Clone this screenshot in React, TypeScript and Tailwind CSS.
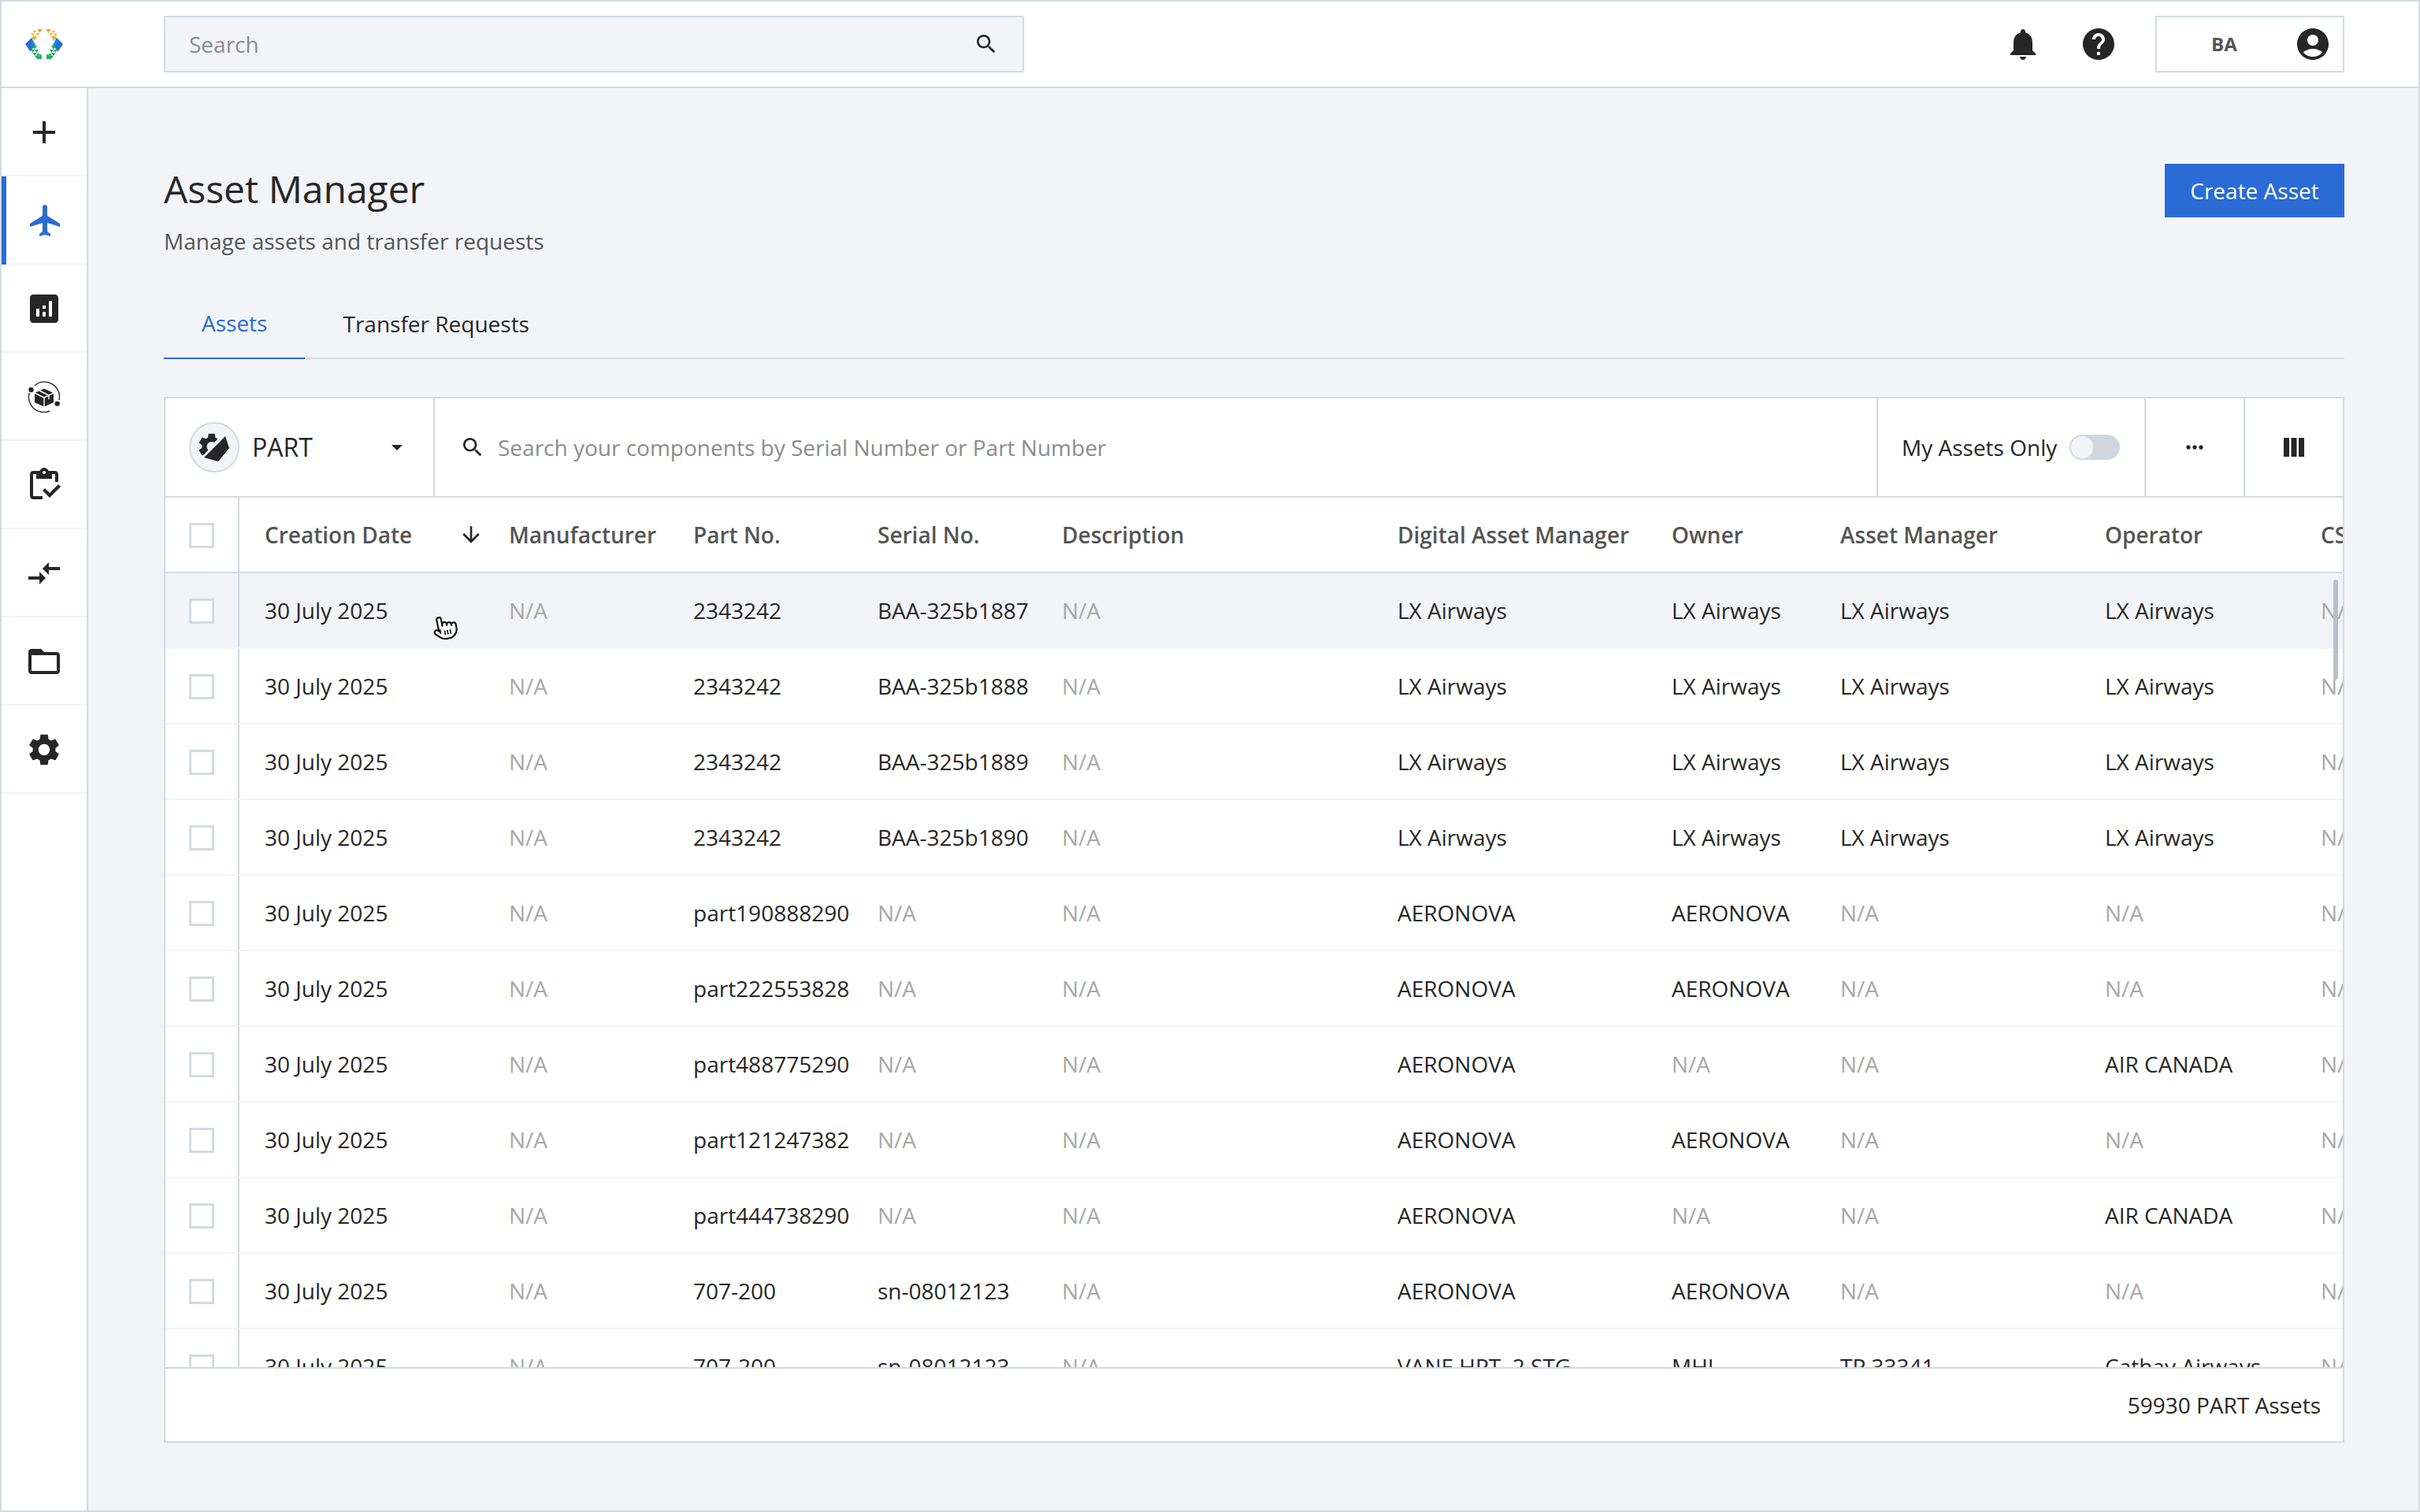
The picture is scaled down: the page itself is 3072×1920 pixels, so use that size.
const GRID =
  "grid grid-cols-[94px_342px_234px_234px_234px_426px_348px_214px_336px_274px_28px]";

const rows: string[][] = [
  ["N/A", "2343242", "BAA-325b1887", "N/A", "LX Airways", "LX Airways", "LX Airways", "LX Airways", "N/A"],
  ["N/A", "2343242", "BAA-325b1888", "N/A", "LX Airways", "LX Airways", "LX Airways", "LX Airways", "N/A"],
  ["N/A", "2343242", "BAA-325b1889", "N/A", "LX Airways", "LX Airways", "LX Airways", "LX Airways", "N/A"],
  ["N/A", "2343242", "BAA-325b1890", "N/A", "LX Airways", "LX Airways", "LX Airways", "LX Airways", "N/A"],
  ["N/A", "part190888290", "N/A", "N/A", "AERONOVA", "AERONOVA", "N/A", "N/A", "N/A"],
  ["N/A", "part222553828", "N/A", "N/A", "AERONOVA", "AERONOVA", "N/A", "N/A", "N/A"],
  ["N/A", "part488775290", "N/A", "N/A", "AERONOVA", "N/A", "N/A", "AIR CANADA", "N/A"],
  ["N/A", "part121247382", "N/A", "N/A", "AERONOVA", "AERONOVA", "N/A", "N/A", "N/A"],
  ["N/A", "part444738290", "N/A", "N/A", "AERONOVA", "N/A", "N/A", "AIR CANADA", "N/A"],
  ["N/A", "707-200", "sn-08012123", "N/A", "AERONOVA", "AERONOVA", "N/A", "N/A", "N/A"],
  ["N/A", "707-200", "sn-08012123", "N/A", "VANE HPT, 2 STG", "MHI", "TP 33341", "Cathay Airways", "N/A"],
];

const headers = ["Manufacturer", "Part No.", "Serial No.", "Description", "Digital Asset Manager", "Owner", "Asset Manager", "Operator", "CSN"];

const SETTINGS =
  "M19.14 12.94c.04-.3.06-.61.06-.94 0-.32-.02-.64-.07-.94l2.03-1.58c.18-.14.23-.41.12-.61l-1.92-3.32c-.12-.22-.37-.29-.59-.22l-2.39.96c-.5-.38-1.03-.7-1.62-.94l-.36-2.54c-.04-.24-.24-.41-.48-.41h-3.84c-.24 0-.43.17-.47.41l-.36 2.54c-.59.24-1.13.57-1.62.94l-2.39-.96c-.22-.08-.47 0-.59.22L2.74 8.87c-.12.21-.08.47.12.61l2.03 1.58c-.05.3-.09.63-.09.94s.02.64.07.94l-2.03 1.58c-.18.14-.23.41-.12.61l1.92 3.32c.12.22.37.29.59.22l2.39-.96c.5.38 1.03.7 1.62.94l.36 2.54c.05.24.24.41.48.41h3.84c.24 0 .44-.17.47-.41l.36-2.54c.59-.24 1.13-.56 1.62-.94l2.39.96c.22.08.47 0 .59-.22l1.92-3.32c.12-.22.07-.47-.12-.61l-2.01-1.58zM12 15.6c-1.98 0-3.6-1.62-3.6-3.6s1.62-3.6 3.6-3.6 3.6 1.62 3.6 3.6-1.62 3.6-3.6 3.6z";
const SEARCH =
  "M15.5 14h-.79l-.28-.27C15.41 12.59 16 11.11 16 9.5 16 5.91 13.09 3 9.5 3S3 5.91 3 9.5 5.91 16 9.5 16c1.61 0 3.09-.59 4.23-1.57l.27.28v.79l5 4.99L20.49 19l-4.99-5zm-6 0C7.01 14 5 11.99 5 9.5S7.01 5 9.5 5 14 7.01 14 9.5 11.99 14 9.5 14z";

function Mui({ d, size = 48, color = "#262626" }: { d: string; size?: number; color?: string }) {
  return (
    <svg width={size} height={size} viewBox="0 0 24 24" fill={color} className="shrink-0">
      <path d={d} />
    </svg>
  );
}

function Logo() {
  const half = (
    <>
      <polygon points="10,3 14,3 12,6" fill="#f7a823" />
      <polygon points="15,1 22,1 18.5,6" fill="#f7a823" />
      <polygon points="13,6 18,6 15.5,9.5" fill="#f9b13a" />
      <polygon points="7,6.5 12,6.5 9.5,10" fill="#f9b13a" />
      <polygon points="10,10 15,10 12.5,15 8,13" fill="#f7a823" />
      <polygon points="0,20 8,12 13,21 6.5,29.5" fill="#2a6bd6" />
      <polygon points="8,12 13,21 8,21" fill="#1f8fd6" />
      <polygon points="4,20 8,20 6,24" fill="#1f7ad6" />
      <polygon points="9,22 15,22 12,27" fill="#1fb26b" />
      <polygon points="7,27 12,27 9.5,31" fill="#1fb26b" />
      <polygon points="12,27 17,27 14.5,31" fill="#17a85e" />
      <polygon points="9.5,31 14.5,31 12,35" fill="#17a85e" />
      <polygon points="14,32 18.5,32 16.5,35.5" fill="#1fb26b" />
      <polygon points="12,35 21,33 21,39 15,39" fill="#1fb26b" />
    </>
  );
  return (
    <svg width="48" height="40" viewBox="0 0 48 40" className="shrink-0">
      {half}
      <g transform="translate(48,0) scale(-1,1)">{half}</g>
    </svg>
  );
}

function OrbitBox() {
  return (
    <svg width="40" height="40" viewBox="0 0 40 40" className="shrink-0">
      <path d="M8 5.5A19 19 0 0 1 39 24" fill="none" stroke="#262626" strokeWidth="1.4" />
      <path d="M1.3 15A19 19 0 0 0 27 38" fill="none" stroke="#262626" strokeWidth="1.4" />
      <circle cx="3.5" cy="11" r="3.2" fill="#262626" />
      <circle cx="36.7" cy="28.6" r="3.2" fill="#262626" />
      <polygon points="20,9.5 32,15 32,27 20,32.5 8,27 8,15" fill="#262626" />
      <path d="M8 15l12 6 12-6M20 21v12M14 12l12 6v5" fill="none" stroke="#fff" strokeWidth="1.4" />
    </svg>
  );
}

function PartIcon() {
  return (
    <svg width="40" height="38" viewBox="0 0 40 38" className="shrink-0">
      <clipPath id="gear-side">
        <polygon points="0,0 31,0 4,32 0,32" />
      </clipPath>
      <g clipPath="url(#gear-side)">
        <path d={SETTINGS} fill="#262626" transform="translate(-3.7,-2.4) scale(1.7)" />
      </g>
      <polygon points="34,5 39,20 25,37 7,32" fill="#262626" />
    </svg>
  );
}

function ColumnsIcon() {
  return (
    <svg width="26" height="24" viewBox="0 0 26 24" fill="#262626" className="shrink-0">
      <rect x="0" y="0" width="7" height="24" />
      <rect x="9.5" y="0" width="7" height="24" />
      <rect x="19" y="0" width="7" height="24" />
    </svg>
  );
}

function HandCursor() {
  return (
    <svg
      width="34"
      height="34"
      viewBox="0 0 24 24"
      fill="#fff"
      stroke="#111"
      strokeWidth="1.5"
      strokeLinecap="round"
      strokeLinejoin="round"
      className="absolute left-[338px] top-[52px] -rotate-12"
    >
      <path d="M18 11a2 2 0 1 1 4 0v3a8 8 0 0 1-8 8h-2c-2.8 0-4.5-.86-5.99-2.34l-3.6-3.6a2 2 0 0 1 2.83-2.82L7 15" />
      <path d="M6 15V4a2 2 0 0 1 4 0v10h8v-3a2 2 0 0 0-4-1V9a2 2 0 0 0-4 0" stroke="none" />
      <path d="M7 16V4a2 2 0 0 1 3-1.5" fill="none" />
      <path d="M10 9.5V4a2 2 0 0 0-2-2a2 2 0 0 0-2 2v10" />
      <path d="M14 10V9a2 2 0 0 0-2-2a2 2 0 0 0-2 2v1" />
      <path d="M18 11v-1a2 2 0 0 0-2-2a2 2 0 0 0-2 2" />
      <path d="M11 15v3M13.5 15v3M16 15v3" fill="none" strokeWidth="1.2" />
    </svg>
  );
}

const navIcons = [
  <Mui key="add" d="M19 13h-6v6h-2v-6H5v-2h6V5h2v6h6v2z" />,
  <span key="flight" className="pl-[4px]">
    <Mui color="#2a6bd6" d="M21 16v-2l-8-5V3.5c0-.83-.67-1.5-1.5-1.5S10 2.67 10 3.5V9l-8 5v2l8-2.5V19l-2 1.5V22l3.5-1 3.5 1v-1.5L13 19v-5.5l8 2.5z" />
  </span>,
  <Mui key="analytics" d="M19 3H5c-1.1 0-2 .9-2 2v14c0 1.1.9 2 2 2h14c1.1 0 2-.9 2-2V5c0-1.1-.9-2-2-2zM9 17H7v-5h2v5zm4 0h-2v-3h2v3zm0-5h-2v-2h2v2zm4 5h-2V7h2v10z" />,
  <OrbitBox key="orbit" />,
  <Mui key="inventory" d="M5 5h2v3h10V5h2v5h2V5c0-1.1-.9-2-2-2h-4.18C14.4 1.84 13.3 1 12 1S9.6 1.84 9.18 3H5c-1.1 0-2 .9-2 2v14c0 1.1.9 2 2 2h6v-2H5V5zm7-2c.55 0 1 .45 1 1s-.45 1-1 1-1-.45-1-1 .45-1 1-1zM21 11.5L15.51 17l-3.01-3L11 15.5l4.51 4.5 7-7z" />,
  <Mui key="compare" d="M9.01 14H2v2h7.01v3L13 15l-3.99-4v3zm5.98-1v-3H22V8h-7.01V5L11 9l3.99 4z" />,
  <Mui key="folder" d="M20 6h-8l-2-2H4c-1.1 0-1.99.9-1.99 2L2 18c0 1.1.9 2 2 2h16c1.1 0 2-.9 2-2V8c0-1.1-.9-2-2-2zm0 12H4V8h16v10z" />,
  <Mui key="settings" d={SETTINGS} />,
];

function Checkbox() {
  return <div className="w-[32px] h-[32px] border-[3px] border-[#d5dae1] bg-white" />;
}

export default function App() {
  return (
    <div className="w-screen h-screen overflow-hidden flex flex-col border-2 border-[#d5dae1] bg-white font-['Open_Sans',sans-serif] text-[28px] text-[#262626]">
      {/* top bar */}
      <header className="h-[110px] shrink-0 flex items-center pl-[30px] pr-[94px] border-b-2 border-[#d5dae1] bg-white">
        <Logo />
        <div className="ml-[128px] w-[1092px] h-[72px] flex items-center justify-between pl-[30px] pr-[30px] border-2 border-[#d5dae1] bg-[#f2f4f8]">
          <span className="text-[#8c8c8c]">Search</span>
          <Mui d={SEARCH} size={32} />
        </div>
        <div className="ml-auto flex items-center gap-[48px]">
          <Mui d="M12 22c1.1 0 2-.9 2-2h-4c0 1.1.89 2 2 2zm6-6v-5c0-3.07-1.64-5.64-4.5-6.32V4c0-.83-.67-1.5-1.5-1.5s-1.5.67-1.5 1.5v.68C7.63 5.36 6 7.92 6 11v5l-2 2v1h16v-1l-2-2z" />
          <Mui d="M12 2C6.48 2 2 6.48 2 12s4.48 10 10 10 10-4.48 10-10S17.52 2 12 2zm1 17h-2v-2h2v2zm2.07-7.75l-.9.92C13.45 12.9 13 13.5 13 15h-2v-.5c0-1.1.45-2.1 1.17-2.83l1.24-1.26c.37-.36.59-.86.59-1.41 0-1.1-.9-2-2-2s-2 .9-2 2H8c0-2.21 1.79-4 4-4s4 1.79 4 4c0 .88-.36 1.68-.93 2.25z" />
          <div className="w-[240px] h-[72px] flex items-center justify-between pl-[69px] pr-[14px] border-2 border-[#d5dae1]">
            <span className="text-[24px] font-bold text-[#555555]">BA</span>
            <Mui d="M12 2C6.48 2 2 6.48 2 12s4.48 10 10 10 10-4.48 10-10S17.52 2 12 2zm0 4c1.93 0 3.5 1.57 3.5 3.5S13.93 13 12 13s-3.5-1.57-3.5-3.5S10.07 6 12 6zm0 14c-2.03 0-4.43-.82-6.14-2.88C7.55 15.8 9.68 15 12 15s4.45.8 6.14 2.12C16.43 19.18 14.03 20 12 20z" />
          </div>
        </div>
      </header>

      <div className="flex-1 min-h-0 flex">
        {/* side nav */}
        <aside className="w-[110px] shrink-0 border-r-2 border-[#d5dae1] bg-white">
          {navIcons.map((icon, i) => (
            <div
              key={i}
              className="relative h-[112px] pt-[2px] flex items-center justify-center border-b-2 border-[#f2f4f8]"
            >
              {i === 1 && <span className="absolute left-0 top-0 w-[6px] h-[112px] bg-[#2a6bd6]" />}
              {icon}
            </div>
          ))}
        </aside>

        <main className="flex-1 min-w-0 flex flex-col pt-[96px] pl-[96px] pr-[94px] pb-[86px] bg-[#f2f4f8]">
          <div className="flex justify-between">
            <div>
              <h1 className="text-[48px] leading-[64px] font-normal">Asset Manager</h1>
              <p className="mt-[16px] leading-[36px] text-[#555555]">Manage assets and transfer requests</p>
            </div>
            <button className="w-[228px] h-[68px] bg-[#2a6bd6] text-white">Create Asset</button>
          </div>

          <div className="mt-[40px] flex border-b-2 border-[#d5dae1]">
            <div className="h-[92px] pt-[2px] -mb-[2px] flex items-center px-[48px] border-b-2 border-[#2a6bd6] text-[#2a6bd6]">Assets</div>
            <div className="h-[92px] pt-[2px] -mb-[2px] flex items-center px-[48px]">Transfer Requests</div>
          </div>

          {/* assets table */}
          <section className="mt-[48px] flex-1 min-h-0 flex flex-col border-2 border-[#d5dae1] bg-white">
            <div className="h-[126px] shrink-0 flex border-b-2 border-[#d5dae1]">
              <div className="w-[342px] shrink-0 flex items-center pl-[30px] border-r-2 border-[#d5dae1]">
                <div className="w-[64px] h-[64px] shrink-0 flex items-center justify-center rounded-full border-2 border-[#d5dae1] bg-[#f2f4f8]">
                  <PartIcon />
                </div>
                <span className="ml-[16px] text-[32px]">PART</span>
                <span className="ml-[100px] w-0 h-0 border-x-[7px] border-t-[7px] border-x-transparent border-t-[#262626]" />
              </div>
              <div className="flex-1 min-w-0 flex items-center gap-[16px] pl-[32px]">
                <Mui d={SEARCH} size={32} />
                <span className="text-[#8c8c8c]">Search your components by Serial Number or Part Number</span>
              </div>
              <div className="w-[342px] shrink-0 flex items-center gap-[16px] pl-[30px] border-x-2 border-[#d5dae1]">
                <span>My Assets Only</span>
                <div className="w-[64px] h-[32px] rounded-full bg-[#d1d6dd]">
                  <div className="w-[32px] h-[32px] rounded-full border-2 border-[#d5dae1] bg-[#f2f4f8]" />
                </div>
              </div>
              <div className="w-[126px] shrink-0 flex items-center justify-center border-r-2 border-[#d5dae1]">
                <Mui d="M6 10c-1.1 0-2 .9-2 2s.9 2 2 2 2-.9 2-2-.9-2-2-2zm12 0c-1.1 0-2 .9-2 2s.9 2 2 2 2-.9 2-2-.9-2-2-2zm-6 0c-1.1 0-2 .9-2 2s.9 2 2 2 2-.9 2-2-.9-2-2-2z" size={32} />
              </div>
              <div className="w-[124px] shrink-0 flex items-center justify-center">
                <ColumnsIcon />
              </div>
            </div>

            <div className={`${GRID} h-[96px] shrink-0 overflow-hidden whitespace-nowrap border-b-2 border-[#d5dae1] font-semibold text-[#555555]`}>
              <div className="flex items-center pl-[30px] pt-[2px] border-r-2 border-[#d5dae1]">
                <Checkbox />
              </div>
              <div className="flex items-center justify-between pl-[32px] pr-[32px]">
                <span>Creation Date</span>
                <Mui d="M20 12l-1.41-1.41L13 16.17V4h-2v12.17l-5.58-5.59L4 12l8 8 8-8z" size={32} />
              </div>
              {headers.map((h) => (
                <div key={h} className="flex items-center">{h}</div>
              ))}
            </div>

            <div className="relative flex-1 min-h-0 overflow-hidden">
              {rows.map((row, i) => (
                <div
                  key={i}
                  className={`${GRID} h-[96px] overflow-hidden whitespace-nowrap border-b-2 border-[#f2f4f8] ${i === 0 ? "bg-[#f2f4f8]" : ""}`}
                >
                  <div className="flex items-center pl-[30px] pt-[2px] border-r-2 border-[#d5dae1]">
                    <Checkbox />
                  </div>
                  <div className="flex items-center pl-[32px]">30 July 2025</div>
                  {row.map((cell, j) => (
                    <div key={j} className={`flex items-center ${cell === "N/A" ? "text-[#a8a8a8]" : ""}`}>
                      {cell}
                    </div>
                  ))}
                </div>
              ))}
              <div className="absolute right-[6px] top-[8px] w-[6px] h-[127px] rounded-full bg-[#b9c0c9]" />
              <HandCursor />
            </div>

            <div className="h-[94px] shrink-0 flex items-center justify-end pr-[28px] border-t-2 border-[#d5dae1]">
              59930 PART Assets
            </div>
          </section>
        </main>
      </div>
    </div>
  );
}
